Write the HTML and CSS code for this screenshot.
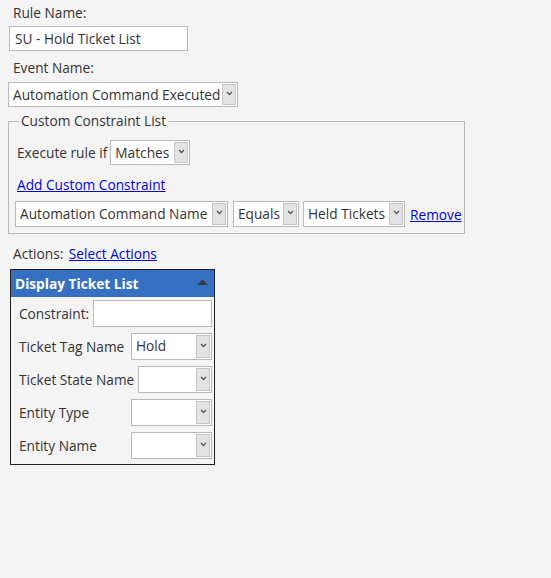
FILE: index.html
```html
<!DOCTYPE html>
<html>
<head>
<meta charset="utf-8">
<link rel="stylesheet" href="styles.css">
</head>
<body>
<div class="field-label first">Rule Name:</div>
<div class="textbox rule-name">SU - Hold Ticket List</div>
<div class="field-label event">Event Name:</div>
<div class="select event-select"><span class="val">Automation Command Executed</span><span class="btn"><svg width="7" height="5" viewBox="0 0 7 5"><path d="M1 1 L3.5 3.5 L6 1" fill="none" stroke="#555" stroke-width="1.3"/></svg></span></div>

<fieldset class="constraints">
  <legend>Custom Constraint List</legend>
  <div class="exec-row">
    <span class="exec-label">Execute rule if</span>
    <div class="select matches"><span class="val">Matches</span><span class="btn"><svg width="7" height="5" viewBox="0 0 7 5"><path d="M1 1 L3.5 3.5 L6 1" fill="none" stroke="#555" stroke-width="1.3"/></svg></span></div>
  </div>
  <div class="add-row"><a href="#">Add Custom Constraint</a></div>
  <div class="constraint-row">
    <div class="select cmd-name"><span class="val">Automation Command Name</span><span class="btn"><svg width="7" height="5" viewBox="0 0 7 5"><path d="M1 1 L3.5 3.5 L6 1" fill="none" stroke="#555" stroke-width="1.3"/></svg></span></div>
    <div class="select equals"><span class="val">Equals</span><span class="btn"><svg width="7" height="5" viewBox="0 0 7 5"><path d="M1 1 L3.5 3.5 L6 1" fill="none" stroke="#555" stroke-width="1.3"/></svg></span></div>
    <div class="select held"><span class="val">Held Tickets</span><span class="btn"><svg width="7" height="5" viewBox="0 0 7 5"><path d="M1 1 L3.5 3.5 L6 1" fill="none" stroke="#555" stroke-width="1.3"/></svg></span></div>
    <a href="#" class="remove">Remove</a>
  </div>
</fieldset>

<div class="actions-row"><span>Actions:</span> <a href="#">Select Actions</a></div>

<div class="panel">
  <div class="panel-head"><span>Display Ticket List</span><svg class="tri" width="11" height="6" viewBox="0 0 11 6"><path d="M0 6 L5.5 0.5 L11 6 Z" fill="#3a3a3a"/></svg></div>
  <div class="panel-body">
    <div class="prow">
      <span class="plabel constraint-label">Constraint:</span>
      <div class="textbox pctl tall"></div>
    </div>
    <div class="prow">
      <span class="plabel">Ticket Tag Name</span>
      <div class="select pctl"><span class="val">Hold</span><span class="btn"><svg width="7" height="5" viewBox="0 0 7 5"><path d="M1 1 L3.5 3.5 L6 1" fill="none" stroke="#555" stroke-width="1.3"/></svg></span></div>
    </div>
    <div class="prow">
      <span class="plabel">Ticket State Name</span>
      <div class="select pctl"><span class="val"></span><span class="btn"><svg width="7" height="5" viewBox="0 0 7 5"><path d="M1 1 L3.5 3.5 L6 1" fill="none" stroke="#555" stroke-width="1.3"/></svg></span></div>
    </div>
    <div class="prow">
      <span class="plabel">Entity Type</span>
      <div class="select pctl"><span class="val"></span><span class="btn"><svg width="7" height="5" viewBox="0 0 7 5"><path d="M1 1 L3.5 3.5 L6 1" fill="none" stroke="#555" stroke-width="1.3"/></svg></span></div>
    </div>
    <div class="prow">
      <span class="plabel">Entity Name</span>
      <div class="select pctl"><span class="val"></span><span class="btn"><svg width="7" height="5" viewBox="0 0 7 5"><path d="M1 1 L3.5 3.5 L6 1" fill="none" stroke="#555" stroke-width="1.3"/></svg></span></div>
    </div>
  </div>
</div>
</body>
</html>
```

FILE: styles.css
```css
* { box-sizing: border-box; }
html, body { background: #f4f4f4; }
body {
  margin: 0;
  padding: 3px 8px 0 8px;
  font-family: "Open Sans", "Noto Sans", sans-serif;
  font-size: 13.7px;
  color: #333;
}
a { color: #0000ee; text-decoration: underline; }

.field-label { height: 20px; line-height: 20px; margin-left: 5px; }
.field-label.event { margin-top: 7px; }

.textbox {
  background: #fff;
  border: 1px solid #b9b9b9;
  height: 25px;
  line-height: 23px;
  padding-left: 5px;
  color: #333;
}
.rule-name { width: 179px; margin-left: 1px; margin-top: 3px; }

.select {
  display: flex;
  align-items: stretch;
  background: #fff;
  border: 1px solid #b9b9b9;
  height: 25px;
  padding: 1px;
}
.select .val {
  flex: 1;
  min-width: 0;
  line-height: 21px;
  padding-left: 3px;
  white-space: nowrap;
  overflow: hidden;
  color: #333;
}
.select .btn {
  flex: none;
  width: 14px;
  background: #e3e3e3;
  border: 1px solid #c6c6c6;
  display: flex;
  align-items: center;
  justify-content: center;
  padding-bottom: 3px;
}
.event-select { width: 230px; margin-top: 4px; }

.constraints {
  margin: 5px 0 0 0;
  width: 457px;
  min-width: 0;
  border: 1px solid #b9b9b9;
  padding: 0 6px 6px 6px;
}
.constraints legend {
  padding: 0 2px;
  margin-left: 4px;
  line-height: 18px;
}
.exec-row { display: flex; align-items: center; margin-top: 10px; margin-left: 2px; }
.exec-label { margin-right: 3px; }
.matches { width: 80px; }
.add-row { height: 20px; line-height: 20px; margin-top: 10px; margin-left: 2px; }
.constraint-row { display: flex; align-items: center; margin-top: 6px; }
.cmd-name { flex: none; width: 213px; height: 26px; }
.equals { flex: none; width: 66px; height: 26px; margin-left: 5px; }
.held { flex: none; width: 102px; height: 26px; margin-left: 4px; }
.remove { flex: none; margin-left: 5px; }

.actions-row { height: 20px; line-height: 20px; margin-top: 10px; margin-left: 5px; }
.actions-row a { margin-left: 2px; }

.panel {
  width: 205px;
  margin: 5px 0 0 2px;
  border: 1px solid #1f1f1f;
  background: #f4f4f4;
}
.panel-head {
  height: 27px;
  background: #3670c3;
  color: #fff;
  font-weight: bold;
  display: flex;
  align-items: center;
  justify-content: space-between;
  padding: 0 6px 0 4px;
}
.panel-head .tri { margin-top: -4px; }
.panel-body { padding: 0 2px 2px 8px; }
.prow { display: flex; align-items: center; height: 33px; }
.plabel { min-width: 112px; white-space: nowrap; padding-right: 4px; }
.plabel.constraint-label { min-width: 0; }
.pctl { flex: 1; height: 27px; }
.textbox.tall { height: 27px; }
```
